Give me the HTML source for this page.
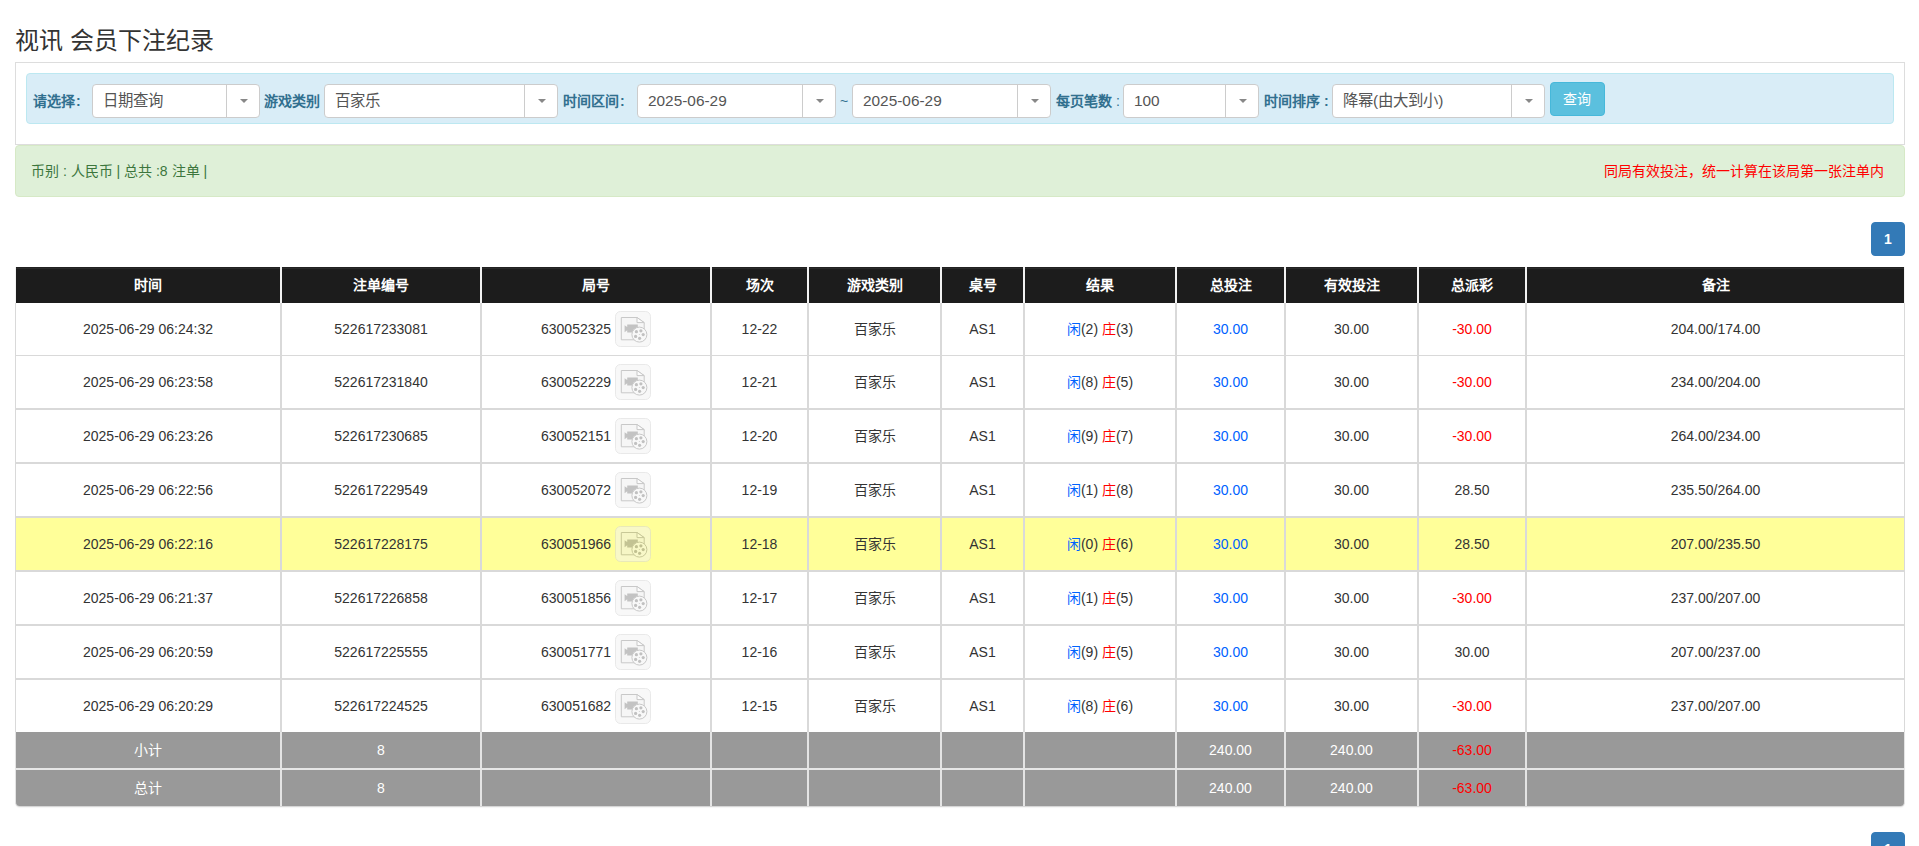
<!DOCTYPE html>
<html lang="zh-CN"><head><meta charset="utf-8"><style>
html,body{margin:0;padding:0;background:#fff;}
body{width:1919px;height:846px;overflow:hidden;position:relative;font-family:"Liberation Sans",sans-serif;font-size:14px;color:#333;}
.abs{position:absolute;}
.title{position:absolute;left:15px;top:23px;font-size:24px;line-height:36px;color:#333;white-space:nowrap;}
.panel{position:absolute;left:15px;top:62px;width:1890px;height:83px;box-sizing:border-box;border:1px solid #ddd;background:#fff;}
.bar{position:absolute;left:26px;top:73px;width:1868px;height:51px;box-sizing:border-box;border:1px solid #bce8f1;background:#d9edf7;border-radius:4px;}
.lbl{position:absolute;top:90px;line-height:22px;font-weight:bold;color:#31708f;white-space:nowrap;font-size:14px;}
.sel{position:absolute;top:84px;height:34px;box-sizing:border-box;border:1px solid #ccc;border-radius:4px;background:#fff;}
.sel .tx{position:absolute;left:10px;top:0;line-height:32px;font-size:15.4px;color:#555;white-space:nowrap;}
.sel .dv{position:absolute;top:0;bottom:0;width:1px;background:#ccc;}
.sel .ct{position:absolute;top:14px;width:0;height:0;border-left:4px solid transparent;border-right:4px solid transparent;border-top:4px solid #888;}
.btn{position:absolute;left:1550px;top:82px;width:55px;height:34px;box-sizing:border-box;padding-right:2px;background:#5bc0de;border:1px solid #46b8da;border-radius:4px;color:#fff;text-align:center;line-height:32px;font-size:14px;}
.alert{position:absolute;left:15px;top:145px;width:1890px;height:52px;box-sizing:border-box;border:1px solid #d6e9c6;background:#dff0d8;border-radius:4px;color:#3c763d;}
.alert .l{position:absolute;left:15px;top:15px;line-height:20px;white-space:nowrap;}
.alert .r{position:absolute;right:20px;top:15px;line-height:20px;white-space:nowrap;color:#f00;}
.pg{position:absolute;left:1871px;width:34px;height:34px;box-sizing:border-box;background:#337ab7;border:1px solid #337ab7;border-radius:4px;color:#fff;text-align:center;line-height:32px;font-weight:bold;font-size:14px;}
.row{position:absolute;left:15px;width:1890px;}
.c{position:absolute;top:0;box-sizing:border-box;text-align:center;white-space:nowrap;border-left:1px solid #d9d9d9;border-right:1px solid #d9d9d9;}
.hd .c{background:linear-gradient(#222 0,#222 1px,#2a2a2a 1px,#2a2a2a 2px,#1c1c1c 2px);color:#fff;border-color:#f2f2f2;font-size:14px;}
.bd{background:#fff;}
.yl .c{background:#ffff99;}
.ft .c{background:#999;color:#fff;border-color:#e4e4e4;}
.hl{position:absolute;left:15px;width:1890px;background:#d9d9d9;}
.fl{position:absolute;left:15px;width:1890px;background:#e6e6e6;}
.blue{color:#0062ff;}
.red{color:#f00;}
.ic{vertical-align:middle;position:relative;top:-1px;}
.tbl{position:absolute;left:0;top:0;}
.shadow{position:absolute;left:16px;top:732px;width:1888px;height:74px;border-radius:0 0 4px 4px;box-shadow:0 1px 1.5px rgba(0,0,0,0.2);}
.ft2 .c:first-child{border-bottom-left-radius:4px;}
.ft2 .c:last-child{border-bottom-right-radius:4px;}
</style></head><body>
<div class="title">视讯 会员下注纪录</div>
<div class="panel"></div>
<div class="bar"></div>
<div class="lbl" style="left:33px">请选择<span style="margin-left:1px">:</span></div>
<div class="sel" style="left:92px;width:168px"><span class="tx" >日期查询</span><div class="dv" style="left:133px"></div><div class="ct" style="left:147px"></div></div>
<div class="lbl" style="left:264px">游戏类别</div>
<div class="sel" style="left:324px;width:234px"><span class="tx" >百家乐</span><div class="dv" style="left:199px"></div><div class="ct" style="left:213px"></div></div>
<div class="lbl" style="left:563px">时间区间<span style="margin-left:1px">:</span></div>
<div class="sel" style="left:637px;width:199px"><span class="tx">2025-06-29</span><div class="dv" style="left:164px"></div><div class="ct" style="left:178px"></div></div>
<div class="lbl" style="left:840px;font-weight:normal">~</div>
<div class="sel" style="left:852px;width:199px"><span class="tx">2025-06-29</span><div class="dv" style="left:164px"></div><div class="ct" style="left:178px"></div></div>
<div class="lbl" style="left:1056px">每页笔数 <span style="font-weight:normal">:</span></div>
<div class="sel" style="left:1123px;width:136px"><span class="tx">100</span><div class="dv" style="left:101px"></div><div class="ct" style="left:115px"></div></div>
<div class="lbl" style="left:1264px">时间排序 :</div>
<div class="sel" style="left:1332px;width:213px"><span class="tx" >降幂(由大到小)</span><div class="dv" style="left:178px"></div><div class="ct" style="left:192px"></div></div>
<div class="btn">查询</div>
<div class="alert"><span class="l">币别 : 人民币 | 总共 :8 注单 |</span><span class="r">同局有效投注，统一计算在该局第一张注单内</span></div>
<div class="pg" style="top:222px">1</div>
<div class="shadow"></div>
<div class="row hd" style="top:267px;height:36px;"><div class="c" style="left:0px;width:266px;height:36px;line-height:36px;"><b>时间</b></div><div class="c" style="left:266px;width:200px;height:36px;line-height:36px;"><b>注单编号</b></div><div class="c" style="left:466px;width:230px;height:36px;line-height:36px;"><b>局号</b></div><div class="c" style="left:696px;width:97px;height:36px;line-height:36px;"><b>场次</b></div><div class="c" style="left:793px;width:133px;height:36px;line-height:36px;"><b>游戏类别</b></div><div class="c" style="left:926px;width:83px;height:36px;line-height:36px;"><b>桌号</b></div><div class="c" style="left:1009px;width:152px;height:36px;line-height:36px;"><b>结果</b></div><div class="c" style="left:1161px;width:109px;height:36px;line-height:36px;"><b>总投注</b></div><div class="c" style="left:1270px;width:133px;height:36px;line-height:36px;"><b>有效投注</b></div><div class="c" style="left:1403px;width:108px;height:36px;line-height:36px;"><b>总派彩</b></div><div class="c" style="left:1511px;width:379px;height:36px;line-height:36px;"><b>备注</b></div></div><div class="row bd" style="top:303px;height:52px;"><div class="c" style="left:0px;width:266px;height:52px;line-height:52px;">2025-06-29 06:24:32</div><div class="c" style="left:266px;width:200px;height:52px;line-height:52px;">522617233081</div><div class="c" style="left:466px;width:230px;height:52px;line-height:52px;">630052325 <svg class="ic" width="36" height="36" viewBox="0 0 36 36" style="opacity:0.52"><rect x="0.5" y="0.5" width="35" height="35" rx="5" fill="#f3f3f3" stroke="#d5d5d5"/><path d="M6.3 6.5H22L29.2 11.6V28.8H6.3Z" fill="#eeeeee" stroke="#979797" stroke-width="1"/><path d="M22 6.5V11.6H29.2Z" fill="#fbfbfb" stroke="#979797" stroke-width="1"/><path d="M9.6 14.2L12.2 16V13.6H22.8V21.5H12.2V19.3L9.6 21.2Z" fill="#8e8e8e"/><circle cx="24.4" cy="23.6" r="7.5" fill="#f3f3f3" stroke="#979797" stroke-width="1"/><circle cx="21.4" cy="20.7" r="1.6" fill="#8a8a8a"/><circle cx="25.9" cy="19.8" r="1.6" fill="#8a8a8a"/><circle cx="28.2" cy="23.6" r="1.6" fill="#8a8a8a"/><circle cx="20.6" cy="25.4" r="1.6" fill="#8a8a8a"/><circle cx="24.6" cy="27.3" r="1.6" fill="#8a8a8a"/><circle cx="24.3" cy="23.6" r="0.5" fill="#959595"/></svg></div><div class="c" style="left:696px;width:97px;height:52px;line-height:52px;">12-22</div><div class="c" style="left:793px;width:133px;height:52px;line-height:52px;">百家乐</div><div class="c" style="left:926px;width:83px;height:52px;line-height:52px;">AS1</div><div class="c" style="left:1009px;width:152px;height:52px;line-height:52px;"><span class="blue">闲</span>(2) <span class="red">庄</span>(3)</div><div class="c" style="left:1161px;width:109px;height:52px;line-height:52px;"><span class="blue">30.00</span></div><div class="c" style="left:1270px;width:133px;height:52px;line-height:52px;">30.00</div><div class="c" style="left:1403px;width:108px;height:52px;line-height:52px;"><span class="red">-30.00</span></div><div class="c" style="left:1511px;width:379px;height:52px;line-height:52px;">204.00/174.00</div></div><div class="row bd" style="top:356px;height:52px;"><div class="c" style="left:0px;width:266px;height:52px;line-height:52px;">2025-06-29 06:23:58</div><div class="c" style="left:266px;width:200px;height:52px;line-height:52px;">522617231840</div><div class="c" style="left:466px;width:230px;height:52px;line-height:52px;">630052229 <svg class="ic" width="36" height="36" viewBox="0 0 36 36" style="opacity:0.52"><rect x="0.5" y="0.5" width="35" height="35" rx="5" fill="#f3f3f3" stroke="#d5d5d5"/><path d="M6.3 6.5H22L29.2 11.6V28.8H6.3Z" fill="#eeeeee" stroke="#979797" stroke-width="1"/><path d="M22 6.5V11.6H29.2Z" fill="#fbfbfb" stroke="#979797" stroke-width="1"/><path d="M9.6 14.2L12.2 16V13.6H22.8V21.5H12.2V19.3L9.6 21.2Z" fill="#8e8e8e"/><circle cx="24.4" cy="23.6" r="7.5" fill="#f3f3f3" stroke="#979797" stroke-width="1"/><circle cx="21.4" cy="20.7" r="1.6" fill="#8a8a8a"/><circle cx="25.9" cy="19.8" r="1.6" fill="#8a8a8a"/><circle cx="28.2" cy="23.6" r="1.6" fill="#8a8a8a"/><circle cx="20.6" cy="25.4" r="1.6" fill="#8a8a8a"/><circle cx="24.6" cy="27.3" r="1.6" fill="#8a8a8a"/><circle cx="24.3" cy="23.6" r="0.5" fill="#959595"/></svg></div><div class="c" style="left:696px;width:97px;height:52px;line-height:52px;">12-21</div><div class="c" style="left:793px;width:133px;height:52px;line-height:52px;">百家乐</div><div class="c" style="left:926px;width:83px;height:52px;line-height:52px;">AS1</div><div class="c" style="left:1009px;width:152px;height:52px;line-height:52px;"><span class="blue">闲</span>(8) <span class="red">庄</span>(5)</div><div class="c" style="left:1161px;width:109px;height:52px;line-height:52px;"><span class="blue">30.00</span></div><div class="c" style="left:1270px;width:133px;height:52px;line-height:52px;">30.00</div><div class="c" style="left:1403px;width:108px;height:52px;line-height:52px;"><span class="red">-30.00</span></div><div class="c" style="left:1511px;width:379px;height:52px;line-height:52px;">234.00/204.00</div></div><div class="row bd" style="top:410px;height:52px;"><div class="c" style="left:0px;width:266px;height:52px;line-height:52px;">2025-06-29 06:23:26</div><div class="c" style="left:266px;width:200px;height:52px;line-height:52px;">522617230685</div><div class="c" style="left:466px;width:230px;height:52px;line-height:52px;">630052151 <svg class="ic" width="36" height="36" viewBox="0 0 36 36" style="opacity:0.52"><rect x="0.5" y="0.5" width="35" height="35" rx="5" fill="#f3f3f3" stroke="#d5d5d5"/><path d="M6.3 6.5H22L29.2 11.6V28.8H6.3Z" fill="#eeeeee" stroke="#979797" stroke-width="1"/><path d="M22 6.5V11.6H29.2Z" fill="#fbfbfb" stroke="#979797" stroke-width="1"/><path d="M9.6 14.2L12.2 16V13.6H22.8V21.5H12.2V19.3L9.6 21.2Z" fill="#8e8e8e"/><circle cx="24.4" cy="23.6" r="7.5" fill="#f3f3f3" stroke="#979797" stroke-width="1"/><circle cx="21.4" cy="20.7" r="1.6" fill="#8a8a8a"/><circle cx="25.9" cy="19.8" r="1.6" fill="#8a8a8a"/><circle cx="28.2" cy="23.6" r="1.6" fill="#8a8a8a"/><circle cx="20.6" cy="25.4" r="1.6" fill="#8a8a8a"/><circle cx="24.6" cy="27.3" r="1.6" fill="#8a8a8a"/><circle cx="24.3" cy="23.6" r="0.5" fill="#959595"/></svg></div><div class="c" style="left:696px;width:97px;height:52px;line-height:52px;">12-20</div><div class="c" style="left:793px;width:133px;height:52px;line-height:52px;">百家乐</div><div class="c" style="left:926px;width:83px;height:52px;line-height:52px;">AS1</div><div class="c" style="left:1009px;width:152px;height:52px;line-height:52px;"><span class="blue">闲</span>(9) <span class="red">庄</span>(7)</div><div class="c" style="left:1161px;width:109px;height:52px;line-height:52px;"><span class="blue">30.00</span></div><div class="c" style="left:1270px;width:133px;height:52px;line-height:52px;">30.00</div><div class="c" style="left:1403px;width:108px;height:52px;line-height:52px;"><span class="red">-30.00</span></div><div class="c" style="left:1511px;width:379px;height:52px;line-height:52px;">264.00/234.00</div></div><div class="row bd" style="top:464px;height:52px;"><div class="c" style="left:0px;width:266px;height:52px;line-height:52px;">2025-06-29 06:22:56</div><div class="c" style="left:266px;width:200px;height:52px;line-height:52px;">522617229549</div><div class="c" style="left:466px;width:230px;height:52px;line-height:52px;">630052072 <svg class="ic" width="36" height="36" viewBox="0 0 36 36" style="opacity:0.52"><rect x="0.5" y="0.5" width="35" height="35" rx="5" fill="#f3f3f3" stroke="#d5d5d5"/><path d="M6.3 6.5H22L29.2 11.6V28.8H6.3Z" fill="#eeeeee" stroke="#979797" stroke-width="1"/><path d="M22 6.5V11.6H29.2Z" fill="#fbfbfb" stroke="#979797" stroke-width="1"/><path d="M9.6 14.2L12.2 16V13.6H22.8V21.5H12.2V19.3L9.6 21.2Z" fill="#8e8e8e"/><circle cx="24.4" cy="23.6" r="7.5" fill="#f3f3f3" stroke="#979797" stroke-width="1"/><circle cx="21.4" cy="20.7" r="1.6" fill="#8a8a8a"/><circle cx="25.9" cy="19.8" r="1.6" fill="#8a8a8a"/><circle cx="28.2" cy="23.6" r="1.6" fill="#8a8a8a"/><circle cx="20.6" cy="25.4" r="1.6" fill="#8a8a8a"/><circle cx="24.6" cy="27.3" r="1.6" fill="#8a8a8a"/><circle cx="24.3" cy="23.6" r="0.5" fill="#959595"/></svg></div><div class="c" style="left:696px;width:97px;height:52px;line-height:52px;">12-19</div><div class="c" style="left:793px;width:133px;height:52px;line-height:52px;">百家乐</div><div class="c" style="left:926px;width:83px;height:52px;line-height:52px;">AS1</div><div class="c" style="left:1009px;width:152px;height:52px;line-height:52px;"><span class="blue">闲</span>(1) <span class="red">庄</span>(8)</div><div class="c" style="left:1161px;width:109px;height:52px;line-height:52px;"><span class="blue">30.00</span></div><div class="c" style="left:1270px;width:133px;height:52px;line-height:52px;">30.00</div><div class="c" style="left:1403px;width:108px;height:52px;line-height:52px;"><span>28.50</span></div><div class="c" style="left:1511px;width:379px;height:52px;line-height:52px;">235.50/264.00</div></div><div class="row bd yl" style="top:518px;height:52px;"><div class="c" style="left:0px;width:266px;height:52px;line-height:52px;">2025-06-29 06:22:16</div><div class="c" style="left:266px;width:200px;height:52px;line-height:52px;">522617228175</div><div class="c" style="left:466px;width:230px;height:52px;line-height:52px;">630051966 <svg class="ic" width="36" height="36" viewBox="0 0 36 36" style="opacity:0.52"><rect x="0.5" y="0.5" width="35" height="35" rx="5" fill="#f3f3f3" stroke="#d5d5d5"/><path d="M6.3 6.5H22L29.2 11.6V28.8H6.3Z" fill="#eeeeee" stroke="#979797" stroke-width="1"/><path d="M22 6.5V11.6H29.2Z" fill="#fbfbfb" stroke="#979797" stroke-width="1"/><path d="M9.6 14.2L12.2 16V13.6H22.8V21.5H12.2V19.3L9.6 21.2Z" fill="#8e8e8e"/><circle cx="24.4" cy="23.6" r="7.5" fill="#f3f3f3" stroke="#979797" stroke-width="1"/><circle cx="21.4" cy="20.7" r="1.6" fill="#8a8a8a"/><circle cx="25.9" cy="19.8" r="1.6" fill="#8a8a8a"/><circle cx="28.2" cy="23.6" r="1.6" fill="#8a8a8a"/><circle cx="20.6" cy="25.4" r="1.6" fill="#8a8a8a"/><circle cx="24.6" cy="27.3" r="1.6" fill="#8a8a8a"/><circle cx="24.3" cy="23.6" r="0.5" fill="#959595"/></svg></div><div class="c" style="left:696px;width:97px;height:52px;line-height:52px;">12-18</div><div class="c" style="left:793px;width:133px;height:52px;line-height:52px;">百家乐</div><div class="c" style="left:926px;width:83px;height:52px;line-height:52px;">AS1</div><div class="c" style="left:1009px;width:152px;height:52px;line-height:52px;"><span class="blue">闲</span>(0) <span class="red">庄</span>(6)</div><div class="c" style="left:1161px;width:109px;height:52px;line-height:52px;"><span class="blue">30.00</span></div><div class="c" style="left:1270px;width:133px;height:52px;line-height:52px;">30.00</div><div class="c" style="left:1403px;width:108px;height:52px;line-height:52px;"><span>28.50</span></div><div class="c" style="left:1511px;width:379px;height:52px;line-height:52px;">207.00/235.50</div></div><div class="row bd" style="top:572px;height:52px;"><div class="c" style="left:0px;width:266px;height:52px;line-height:52px;">2025-06-29 06:21:37</div><div class="c" style="left:266px;width:200px;height:52px;line-height:52px;">522617226858</div><div class="c" style="left:466px;width:230px;height:52px;line-height:52px;">630051856 <svg class="ic" width="36" height="36" viewBox="0 0 36 36" style="opacity:0.52"><rect x="0.5" y="0.5" width="35" height="35" rx="5" fill="#f3f3f3" stroke="#d5d5d5"/><path d="M6.3 6.5H22L29.2 11.6V28.8H6.3Z" fill="#eeeeee" stroke="#979797" stroke-width="1"/><path d="M22 6.5V11.6H29.2Z" fill="#fbfbfb" stroke="#979797" stroke-width="1"/><path d="M9.6 14.2L12.2 16V13.6H22.8V21.5H12.2V19.3L9.6 21.2Z" fill="#8e8e8e"/><circle cx="24.4" cy="23.6" r="7.5" fill="#f3f3f3" stroke="#979797" stroke-width="1"/><circle cx="21.4" cy="20.7" r="1.6" fill="#8a8a8a"/><circle cx="25.9" cy="19.8" r="1.6" fill="#8a8a8a"/><circle cx="28.2" cy="23.6" r="1.6" fill="#8a8a8a"/><circle cx="20.6" cy="25.4" r="1.6" fill="#8a8a8a"/><circle cx="24.6" cy="27.3" r="1.6" fill="#8a8a8a"/><circle cx="24.3" cy="23.6" r="0.5" fill="#959595"/></svg></div><div class="c" style="left:696px;width:97px;height:52px;line-height:52px;">12-17</div><div class="c" style="left:793px;width:133px;height:52px;line-height:52px;">百家乐</div><div class="c" style="left:926px;width:83px;height:52px;line-height:52px;">AS1</div><div class="c" style="left:1009px;width:152px;height:52px;line-height:52px;"><span class="blue">闲</span>(1) <span class="red">庄</span>(5)</div><div class="c" style="left:1161px;width:109px;height:52px;line-height:52px;"><span class="blue">30.00</span></div><div class="c" style="left:1270px;width:133px;height:52px;line-height:52px;">30.00</div><div class="c" style="left:1403px;width:108px;height:52px;line-height:52px;"><span class="red">-30.00</span></div><div class="c" style="left:1511px;width:379px;height:52px;line-height:52px;">237.00/207.00</div></div><div class="row bd" style="top:626px;height:52px;"><div class="c" style="left:0px;width:266px;height:52px;line-height:52px;">2025-06-29 06:20:59</div><div class="c" style="left:266px;width:200px;height:52px;line-height:52px;">522617225555</div><div class="c" style="left:466px;width:230px;height:52px;line-height:52px;">630051771 <svg class="ic" width="36" height="36" viewBox="0 0 36 36" style="opacity:0.52"><rect x="0.5" y="0.5" width="35" height="35" rx="5" fill="#f3f3f3" stroke="#d5d5d5"/><path d="M6.3 6.5H22L29.2 11.6V28.8H6.3Z" fill="#eeeeee" stroke="#979797" stroke-width="1"/><path d="M22 6.5V11.6H29.2Z" fill="#fbfbfb" stroke="#979797" stroke-width="1"/><path d="M9.6 14.2L12.2 16V13.6H22.8V21.5H12.2V19.3L9.6 21.2Z" fill="#8e8e8e"/><circle cx="24.4" cy="23.6" r="7.5" fill="#f3f3f3" stroke="#979797" stroke-width="1"/><circle cx="21.4" cy="20.7" r="1.6" fill="#8a8a8a"/><circle cx="25.9" cy="19.8" r="1.6" fill="#8a8a8a"/><circle cx="28.2" cy="23.6" r="1.6" fill="#8a8a8a"/><circle cx="20.6" cy="25.4" r="1.6" fill="#8a8a8a"/><circle cx="24.6" cy="27.3" r="1.6" fill="#8a8a8a"/><circle cx="24.3" cy="23.6" r="0.5" fill="#959595"/></svg></div><div class="c" style="left:696px;width:97px;height:52px;line-height:52px;">12-16</div><div class="c" style="left:793px;width:133px;height:52px;line-height:52px;">百家乐</div><div class="c" style="left:926px;width:83px;height:52px;line-height:52px;">AS1</div><div class="c" style="left:1009px;width:152px;height:52px;line-height:52px;"><span class="blue">闲</span>(9) <span class="red">庄</span>(5)</div><div class="c" style="left:1161px;width:109px;height:52px;line-height:52px;"><span class="blue">30.00</span></div><div class="c" style="left:1270px;width:133px;height:52px;line-height:52px;">30.00</div><div class="c" style="left:1403px;width:108px;height:52px;line-height:52px;"><span>30.00</span></div><div class="c" style="left:1511px;width:379px;height:52px;line-height:52px;">207.00/237.00</div></div><div class="row bd" style="top:680px;height:52px;"><div class="c" style="left:0px;width:266px;height:52px;line-height:52px;">2025-06-29 06:20:29</div><div class="c" style="left:266px;width:200px;height:52px;line-height:52px;">522617224525</div><div class="c" style="left:466px;width:230px;height:52px;line-height:52px;">630051682 <svg class="ic" width="36" height="36" viewBox="0 0 36 36" style="opacity:0.52"><rect x="0.5" y="0.5" width="35" height="35" rx="5" fill="#f3f3f3" stroke="#d5d5d5"/><path d="M6.3 6.5H22L29.2 11.6V28.8H6.3Z" fill="#eeeeee" stroke="#979797" stroke-width="1"/><path d="M22 6.5V11.6H29.2Z" fill="#fbfbfb" stroke="#979797" stroke-width="1"/><path d="M9.6 14.2L12.2 16V13.6H22.8V21.5H12.2V19.3L9.6 21.2Z" fill="#8e8e8e"/><circle cx="24.4" cy="23.6" r="7.5" fill="#f3f3f3" stroke="#979797" stroke-width="1"/><circle cx="21.4" cy="20.7" r="1.6" fill="#8a8a8a"/><circle cx="25.9" cy="19.8" r="1.6" fill="#8a8a8a"/><circle cx="28.2" cy="23.6" r="1.6" fill="#8a8a8a"/><circle cx="20.6" cy="25.4" r="1.6" fill="#8a8a8a"/><circle cx="24.6" cy="27.3" r="1.6" fill="#8a8a8a"/><circle cx="24.3" cy="23.6" r="0.5" fill="#959595"/></svg></div><div class="c" style="left:696px;width:97px;height:52px;line-height:52px;">12-15</div><div class="c" style="left:793px;width:133px;height:52px;line-height:52px;">百家乐</div><div class="c" style="left:926px;width:83px;height:52px;line-height:52px;">AS1</div><div class="c" style="left:1009px;width:152px;height:52px;line-height:52px;"><span class="blue">闲</span>(8) <span class="red">庄</span>(6)</div><div class="c" style="left:1161px;width:109px;height:52px;line-height:52px;"><span class="blue">30.00</span></div><div class="c" style="left:1270px;width:133px;height:52px;line-height:52px;">30.00</div><div class="c" style="left:1403px;width:108px;height:52px;line-height:52px;"><span class="red">-30.00</span></div><div class="c" style="left:1511px;width:379px;height:52px;line-height:52px;">237.00/207.00</div></div><div class="hl" style="top:355px;height:1px"></div><div class="hl" style="top:408px;height:2px"></div><div class="hl" style="top:462px;height:2px"></div><div class="hl" style="top:516px;height:2px"></div><div class="hl" style="top:570px;height:2px"></div><div class="hl" style="top:624px;height:2px"></div><div class="hl" style="top:678px;height:2px"></div><div class="row ft" style="top:732px;height:36px;"><div class="c" style="left:0px;width:266px;height:36px;line-height:36px;">小计</div><div class="c" style="left:266px;width:200px;height:36px;line-height:36px;">8</div><div class="c" style="left:466px;width:230px;height:36px;line-height:36px;"></div><div class="c" style="left:696px;width:97px;height:36px;line-height:36px;"></div><div class="c" style="left:793px;width:133px;height:36px;line-height:36px;"></div><div class="c" style="left:926px;width:83px;height:36px;line-height:36px;"></div><div class="c" style="left:1009px;width:152px;height:36px;line-height:36px;"></div><div class="c" style="left:1161px;width:109px;height:36px;line-height:36px;">240.00</div><div class="c" style="left:1270px;width:133px;height:36px;line-height:36px;">240.00</div><div class="c" style="left:1403px;width:108px;height:36px;line-height:36px;"><span class="red">-63.00</span></div><div class="c" style="left:1511px;width:379px;height:36px;line-height:36px;"></div></div><div class="row ft ft2" style="top:770px;height:36px;"><div class="c" style="left:0px;width:266px;height:36px;line-height:36px;">总计</div><div class="c" style="left:266px;width:200px;height:36px;line-height:36px;">8</div><div class="c" style="left:466px;width:230px;height:36px;line-height:36px;"></div><div class="c" style="left:696px;width:97px;height:36px;line-height:36px;"></div><div class="c" style="left:793px;width:133px;height:36px;line-height:36px;"></div><div class="c" style="left:926px;width:83px;height:36px;line-height:36px;"></div><div class="c" style="left:1009px;width:152px;height:36px;line-height:36px;"></div><div class="c" style="left:1161px;width:109px;height:36px;line-height:36px;">240.00</div><div class="c" style="left:1270px;width:133px;height:36px;line-height:36px;">240.00</div><div class="c" style="left:1403px;width:108px;height:36px;line-height:36px;"><span class="red">-63.00</span></div><div class="c" style="left:1511px;width:379px;height:36px;line-height:36px;"></div></div><div class="fl" style="top:768px;height:2px"></div>
<div class="pg" style="top:832px">1</div>
</body></html>
